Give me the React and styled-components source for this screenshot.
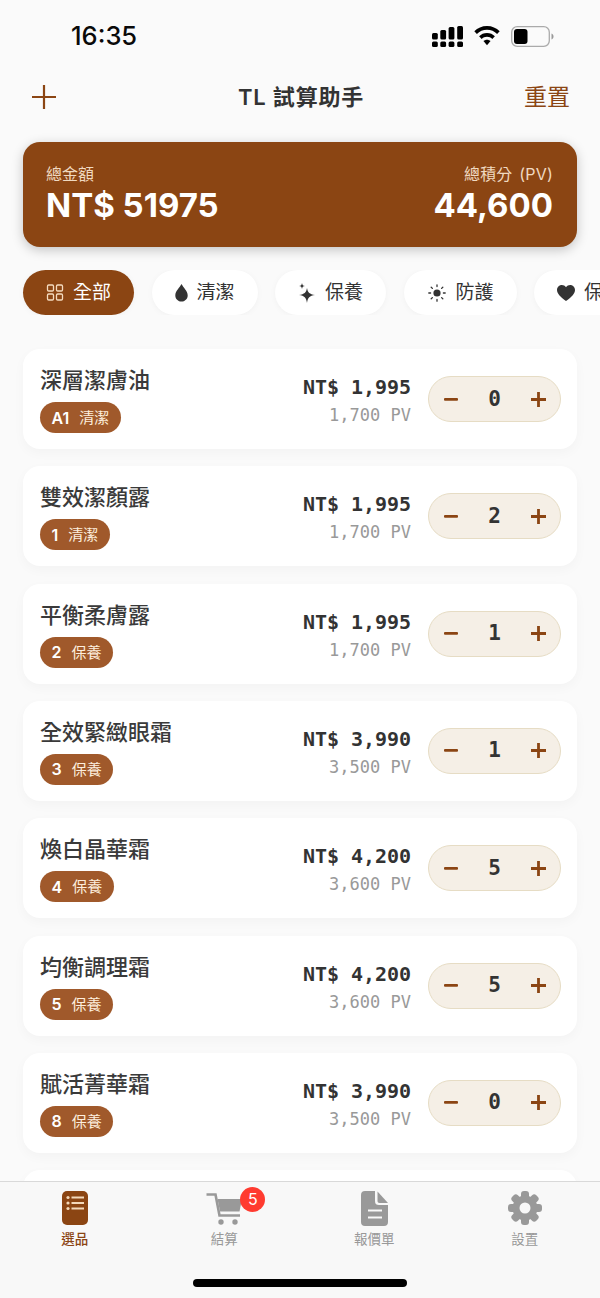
import React from "react";
import styled, { createGlobalStyle } from "styled-components";

const Global = createGlobalStyle`
  html, body { margin: 0; padding: 0; background: #fafafa; }
  body { font-family: Inter, "Noto Sans CJK TC", sans-serif; }
  * { box-sizing: border-box; }
`;
const CJK = `Inter, "Noto Sans CJK TC", sans-serif`;
const MONO = `"DejaVu Sans Mono", "Noto Sans CJK TC", monospace`;

const Phone = styled.div`
  width: 600px; height: 1298px; display: flex; flex-direction: column;
  overflow: hidden; background: #fafafa; color: #333;
`;
const StatusBar = styled.div`
  height: 72px; flex: none; display: flex; justify-content: space-between; align-items: center;
  padding: 0 46px 0 71px;
`;
const Time = styled.div`
  font: 500 25.5px/1 Inter, sans-serif; color: #0a0a0a;
`;
const StatusIcons = styled.div`display: flex; align-items: center; gap: 11px;`;
const Header = styled.div`
  height: 50px; flex: none; padding: 0 30px 0 32px; display: grid; grid-template-columns: 1fr auto 1fr; align-items: center;
`;
const HeaderTitle = styled.div`font: 600 22px/1 ${CJK}; color: #333; letter-spacing: 0.8px;`;
const ResetLabel = styled.div`font: 400 23px/1 ${CJK}; color: #8b4513; justify-self: end;`;
const Summary = styled.div`
  flex: none; margin: 20px 23px 0; height: 105px; background: #8b4513; border-radius: 17px;
  padding: 23px 24px 0 23px; display: flex; justify-content: space-between;
  box-shadow: 0 3px 12px rgba(0,0,0,.22);
`;
const SumCol = styled.div`display: flex; flex-direction: column; align-items: ${p => p.$right ? "flex-end" : "flex-start"};`;
const SumLabel = styled.div`font: 400 16px/19px ${CJK}; color: #f0d9c0; word-spacing: 2px; letter-spacing: ${p => p.$right ? ".2px" : "0"};`;
const SumValue = styled.div`font: 700 33px/42px ${CJK}; color: #fff;`;
const Chips = styled.div`
  flex: none; display: flex; gap: 17.5px; padding: 0 23px; margin-top: 23px; height: 45px; overflow: hidden;
`;
const Chip = styled.div`
  flex: none; height: 45px; border-radius: 23px; display: flex; align-items: center; gap: 9px;
  padding: 0 23px; background: ${p => p.$on ? "#8b4513" : "#fff"};
  color: ${p => p.$on ? "#fff" : "#333"}; font: 400 19px/1 ${CJK};
  box-shadow: 0 1px 6px rgba(0,0,0,.04);
`;
const List = styled.div`
  flex: 1; min-height: 0; overflow: hidden; padding: 34px 23px 0; display: flex; flex-direction: column; gap: 17.33px;
`;
const Card = styled.div`
  flex: none; height: 100px; border-radius: 17px; background: #fff; display: flex; align-items: center;
  padding: 0 16px 0 17px; box-shadow: 0 4px 12px rgba(0,0,0,.03);
`;
const Info = styled.div`flex: 1; display: flex; flex-direction: column; align-items: flex-start; gap: 7px;`;
const Name = styled.div`font: 500 22px/30px ${CJK}; color: #3a3a3a;`;
const Tag = styled.div`
  height: 31px; border-radius: 16px; background: #a0592b; color: #fff; display: flex; align-items: center; gap: 10px; padding: 0 11.5px;
`;
const TagCode = styled.span`font: 600 16px/1 Inter, sans-serif;`;
const TagCat = styled.span`font: 400 15px/1 ${CJK}; color: #fdeedd;`;
const Prices = styled.div`display: flex; flex-direction: column; align-items: flex-end; gap: 6px; margin: 2px 17px 0 0;`;
const Price = styled.div`font: 700 20px/24px ${MONO}; color: #333; letter-spacing: -.05px;`;
const Pv = styled.div`font: 400 17px/20px ${MONO}; color: #999;`;
const Stepper = styled.div`
  width: 133px; height: 46px; border-radius: 23px; background: #f5efe6; border: 1.5px solid #e6dcc4;
  display: flex; align-items: center; justify-content: space-between; padding: 0 13px;
`;
const StepBtn = styled.span`
  width: 17px; height: 17px; display: flex; align-items: center; justify-content: center; color: #8b4513;
`;
const Qty = styled.span`font: 700 21px/1 ${MONO}; color: #333;`;
const TabBar = styled.div`
  flex: none; height: 117px; border-top: 1px solid #d9d9d9; background: #f8f8f8; position: relative;
  display: grid; grid-template-columns: 149.5px 149.5px 150.5px 150.5px; padding: 8px 0 0 0;
`;
const Tab = styled.div`
  display: flex; flex-direction: column; align-items: center; color: ${p => p.$on ? "#8b4513" : "#999"};
`;
const TabIcon = styled.div`height: 36px; display: flex; align-items: center; justify-content: center; position: relative;`;
const TabLabel = styled.div`font: ${p => p.$on ? 500 : 400} 13.5px/1 ${CJK}; margin-top: 7px;`;
const Badge = styled.div`
  position: absolute; left: 34px; top: -3px; width: 25px; height: 25px; border-radius: 50%;
  background: #ff3b30; color: #fff; font: 400 16px/25px Inter, sans-serif; text-align: center;
`;
const HomeBar = styled.div`
  position: absolute; left: 193px; top: 97px; width: 214px; height: 8px; border-radius: 4px; background: #000;
`;

const Signal = () => (
  <svg width="31" height="21" viewBox="0 0 31 21" fill="#000">
    {[[0, 7], [8.3, 4], [16.6, 1], [25.2, 0]].map(([x, top]) => (
      <g key={x}>
        <rect x={x} y={15.5} width="5.800" height="5.500" rx="1.500" />
        <rect x={x} y={top} width="5.800" height={13.5 - top} rx="1.500" />
      </g>
    ))}
  </svg>
);
const Wifi = () => (
  <svg width="26" height="20" viewBox="0 0 25 19" fill="#000">
    <path d="M12.5 0C7.7 0 3.400 1.900.3 5l2.500 2.600C5.300 5.100 8.700 3.600 12.500 3.600s7.200 1.500 9.700 4L24.700 5C21.600 1.900 17.300 0 12.500 0z" />
    <path d="M12.500 6.600c-3 0-5.600 1.200-7.600 3.100l2.500 2.600c1.300-1.300 3.100-2.100 5.100-2.100s3.800.8 5.100 2.100l2.500-2.600c-2-1.900-4.600-3.100-7.600-3.100z" />
    <path d="M12.500 13c-1.300 0-2.500.5-3.400 1.400l3.400 3.900 3.400-3.900C15 13.500 13.800 13 12.500 13z" />
  </svg>
);
const Battery = () => (
  <svg width="43" height="21" viewBox="0 0 43 21">
    <rect x=".7" y=".7" width="37.600" height="19.600" rx="5.500" fill="none" stroke="#aaa" strokeWidth="1.300" />
    <rect x="3" y="3" width="13.500" height="15" rx="3" fill="#000" />
    <path d="M40.500 7.500c1.300.5 2 1.600 2 3s-.7 2.500-2 3z" fill="#999" />
  </svg>
);
const PlusLg = () => (
  <svg width="24" height="24" viewBox="0 0 24 24" stroke="#8b4513" strokeWidth="2.200">
    <path d="M12 0v24M0 12h24" />
  </svg>
);
const GridIcon = () => (
  <svg width="18" height="17" viewBox="0 0 17 17" fill="none" stroke="#f5dcc0" strokeWidth="1.300">
    <rect x="1" y="1" width="6" height="6" rx="1.200" /><rect x="10" y="1" width="6" height="6" rx="1.200" />
    <rect x="1" y="10" width="6" height="6" rx="1.200" /><rect x="10" y="10" width="6" height="6" rx="1.200" />
  </svg>
);
const Drop = () => (
  <svg width="13" height="18" viewBox="0 0 13 18" fill="#333"><path d="M6.500 0C4.700 3.500.3 7 .3 11.500.3 15 3.200 17.600 6.500 17.600s6.200-2.600 6.200-6.100C12.700 7 8.300 3.500 6.500 0z" /></svg>
);
const Sparkle = () => (
  <svg width="18" height="20" viewBox="0 0 18 20" fill="#333">
    <path d="M9 5c.8 4.500 2.500 6.200 8 7-5.500.8-7.200 2.500-8 8-.8-5.500-2.500-7.200-8-8 5.500-.8 7.200-2.500 8-7z" />
    <path d="M4 0c.3 2 1 2.700 3 3-2 .3-2.700 1-3 3-.3-2-1-2.700-3-3 2-.3 2.700-1 3-3z" />
  </svg>
);
const Sun = () => (
  <svg width="20" height="18" viewBox="-1 0 20 18" fill="#333" stroke="#333" strokeWidth="1.300" strokeLinecap="round">
    <circle cx="9" cy="9" r="3.600" stroke="none" />
    <path d="M9 .8v1.800M9 15.400v1.800M.8 9h1.800M15.400 9h1.800M3.200 3.200l1.200 1.200M13.600 13.600l1.200 1.200M3.200 14.800l1.200-1.200M13.600 4.400l1.200-1.200" />
  </svg>
);
const Heart = () => (
  <svg width="18" height="16" viewBox="0 0 18 16" fill="#333"><path d="M9 16C3 11.500 0 8.500 0 5 0 2.200 2.200 0 4.800 0 6.500 0 8 .8 9 2.300 10 .8 11.500 0 13.200 0 15.800 0 18 2.200 18 5c0 3.500-3 6.500-9 11z" /></svg>
);
const Minus = () => (
  <svg width="14" height="3" viewBox="0 0 14 3" fill="#8b4513"><rect width="14" height="2.800" rx="1" /></svg>
);
const Plus = () => (
  <svg width="15" height="15" viewBox="0 0 15 15" fill="#8b4513"><path d="M6.100 0h2.800v6.100H15v2.800H8.900V15H6.100V8.900H0V6.100h6.100z" /></svg>
);
const ListIcon = () => (
  <svg width="26" height="34" viewBox="0 0 26 34">
    <rect width="26" height="34" rx="5" fill="#8b4513" />
    <g fill="#f3d9bb">
      <circle cx="6" cy="6.500" r="1.600" /><circle cx="6" cy="12" r="1.600" /><circle cx="6" cy="17.500" r="1.600" />
      <rect x="9.500" y="5.500" width="12.500" height="2" /><rect x="9.500" y="11" width="12.500" height="2" /><rect x="9.500" y="16.500" width="12.500" height="2" />
    </g>
  </svg>
);
const Cart = () => (
  <svg width="36" height="33" viewBox="0 0 36 33" fill="#999">
    <path d="M.5 2.500H9.500L13.500 23.500H34" fill="none" stroke="#999" strokeWidth="2.600" />
    <path d="M11.500 7H36L33.500 19.500H14z" />
    <circle cx="15" cy="30" r="2.700" /><circle cx="29" cy="30" r="2.700" />
  </svg>
);
const Doc = () => (
  <svg width="27" height="35" viewBox="0 0 27 35" fill="#999">
    <path d="M4 0H14V10C14 13 15.500 14 18 14H27V31a4 4 0 0 1-4 4H4a4 4 0 0 1-4-4V4a4 4 0 0 1 4-4z" />
    <path d="M16.500.5 27 12H18.500c-1.300 0-2-.7-2-2z" />
    <rect x="7" y="18.500" width="14" height="2" fill="#f8f8f8" /><rect x="7" y="25.500" width="14" height="2" fill="#f8f8f8" />
  </svg>
);
const Gear = () => {
  const teeth = [0, 45, 90, 135];
  return (
    <svg width="34" height="34" viewBox="-17 -17 34 34">
      <g fill="#999">
        {teeth.map(a => <rect key={a} x="-4" y="-17" width="8" height="34" rx="3" transform={`rotate(${a})`} />)}
        <circle r="12.500" />
      </g>
      <circle r="5.500" fill="#f8f8f8" />
    </svg>
  );
};

const chips = [
  { label: "全部", icon: <GridIcon />, on: true },
  { label: "清潔", icon: <Drop /> },
  { label: "保養", icon: <Sparkle /> },
  { label: "防護", icon: <Sun /> },
  { label: "保健", icon: <Heart /> },
];
const items = [
  ["深層潔膚油", "A1", "清潔", "1,995", "1,700", 0],
  ["雙效潔顏露", "1", "清潔", "1,995", "1,700", 2],
  ["平衡柔膚露", "2", "保養", "1,995", "1,700", 1],
  ["全效緊緻眼霜", "3", "保養", "3,990", "3,500", 1],
  ["煥白晶華霜", "4", "保養", "4,200", "3,600", 5],
  ["均衡調理霜", "5", "保養", "4,200", "3,600", 5],
  ["賦活菁華霜", "8", "保養", "3,990", "3,500", 0],
  ["", "", "", "", "", 0],
];

export default function App() {
  return (
    <Phone>
      <Global />
      <StatusBar>
        <Time>16:35</Time>
        <StatusIcons><Signal /><Wifi /><Battery /></StatusIcons>
      </StatusBar>
      <Header>
        <PlusLg />
        <HeaderTitle>TL 試算助手</HeaderTitle>
        <ResetLabel>重置</ResetLabel>
      </Header>
      <Summary>
        <SumCol><SumLabel>總金額</SumLabel><SumValue>NT$ 51975</SumValue></SumCol>
        <SumCol $right><SumLabel $right>總積分 (PV)</SumLabel><SumValue>44,600</SumValue></SumCol>
      </Summary>
      <Chips>
        {chips.map(c => <Chip key={c.label} $on={c.on}>{c.icon}{c.label}</Chip>)}
      </Chips>
      <List>
        {items.map((it, i) => (
          <Card key={i}>
            {it[0] && <>
              <Info>
                <Name>{it[0]}</Name>
                <Tag><TagCode>{it[1]}</TagCode><TagCat>{it[2]}</TagCat></Tag>
              </Info>
              <Prices><Price>NT$ {it[3]}</Price><Pv>{it[4]} PV</Pv></Prices>
              <Stepper><StepBtn><Minus /></StepBtn><Qty>{it[5]}</Qty><StepBtn><Plus /></StepBtn></Stepper>
            </>}
          </Card>
        ))}
      </List>
      <TabBar>
        <Tab $on><TabIcon><ListIcon /></TabIcon><TabLabel $on>選品</TabLabel></Tab>
        <Tab><TabIcon><Cart /><Badge>5</Badge></TabIcon><TabLabel>結算</TabLabel></Tab>
        <Tab><TabIcon><Doc /></TabIcon><TabLabel>報價單</TabLabel></Tab>
        <Tab><TabIcon><Gear /></TabIcon><TabLabel>設置</TabLabel></Tab>
        <HomeBar />
      </TabBar>
    </Phone>
  );
}
